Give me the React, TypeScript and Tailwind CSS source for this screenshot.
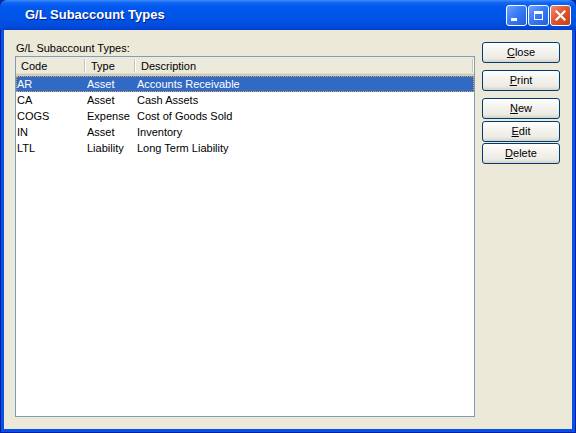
import React from 'react';

interface SubaccountType {
  code: string;
  type: string;
  description: string;
}

const ROWS: SubaccountType[] = [
  { code: 'AR', type: 'Asset', description: 'Accounts Receivable' },
  { code: 'CA', type: 'Asset', description: 'Cash Assets' },
  { code: 'COGS', type: 'Expense', description: 'Cost of Goods Sold' },
  { code: 'IN', type: 'Asset', description: 'Inventory' },
  { code: 'LTL', type: 'Liability', description: 'Long Term Liability' },
];

const FONT = { fontFamily: '"Liberation Sans", Arial, sans-serif' };

function XpButton({ label, mnemonic, className = '' }: { label: string; mnemonic: number; className?: string }) {
  return (
    <button
      className={`h-[21px] w-[78px] rounded-[3px] border border-[#003C74] bg-[linear-gradient(to_bottom,#FFFFFF_0%,#F4F3EE_40%,#ECEBE6_80%,#D8D2C6_100%)] text-[11px] leading-[19px] text-black ${className}`}
    >
      {label.slice(0, mnemonic)}
      <span className="underline">{label[mnemonic]}</span>
      {label.slice(mnemonic + 1)}
    </button>
  );
}

function TitleButton({ kind }: { kind: 'min' | 'max' | 'close' }) {
  const bg =
    kind === 'close'
      ? 'bg-[linear-gradient(135deg,#F08C6C_0%,#E0582F_45%,#C63E16_100%)]'
      : 'bg-[linear-gradient(135deg,#6FA2FF_0%,#3A7CF5_45%,#1F5FDE_100%)]';
  return (
    <div className={`flex h-[21px] w-[21px] items-center justify-center rounded-[3px] border border-white ${bg}`}>
      {kind === 'min' && <div className="mr-[5px] mt-[9px] h-[3px] w-[6px] bg-white" />}
      {kind === 'max' && <div className="h-[9px] w-[9px] border border-t-[3px] border-white" />}
      {kind === 'close' && (
        <svg width="11" height="11" viewBox="0 0 11 11">
          <path d="M1.5 1.5 L9.5 9.5 M9.5 1.5 L1.5 9.5" stroke="white" strokeWidth="2.2" strokeLinecap="square" />
        </svg>
      )}
    </div>
  );
}

export default function App() {
  return (
    <div className="h-[433px] w-[576px] bg-[#0A2A9C]" style={FONT}>
      <div className="flex h-full w-full flex-col overflow-hidden rounded-t-[7px]">
        {/* Title bar */}
        <div className="flex h-[30px] shrink-0 items-center bg-[linear-gradient(to_bottom,#3C8EFF_0%,#1668F5_8%,#0058EE_22%,#0054E6_60%,#004CDD_85%,#0040CF_100%)] pl-[25px] pr-[5px]">
          <span className="flex-1 text-[13px] font-bold text-white [text-shadow:1px_1px_0_#0A1E8A]">
            G/L Subaccount Types
          </span>
          <div className="flex gap-[1px]">
            <TitleButton kind="min" />
            <TitleButton kind="max" />
            <TitleButton kind="close" />
          </div>
        </div>

        {/* Body */}
        <div className="flex flex-1 border-x border-b border-[#00209C]">
          <div className="flex flex-1 border-x-[3px] border-b-[3px] border-[#0A4FE8] bg-[#ECE9D8] pb-[12px] pl-[11px] pr-[12px] pt-[11px]">
            <div className="flex w-[460px] flex-col">
              <div className="h-[15px] pl-[1px] text-[11px] leading-[15px] text-black">G/L Subaccount Types:</div>
              <div className="flex flex-1 flex-col border border-[#7F9DB9] bg-white">
                {/* Header */}
                <div className="flex h-[19px] bg-[#EBEADB] text-[11px] leading-[18px] text-black shadow-[inset_0_-1px_0_#D6D2C2,inset_0_-2px_0_#CBC7B8,inset_0_-3px_0_#E2DECD]">
                  <div className="w-[68px] pl-[5px]">Code</div>
                  <div className="mt-[2px] h-[13px] w-[2px] border-l border-r border-l-[#C7C5B2] border-r-white" />
                  <div className="w-[48px] pl-[5px]">Type</div>
                  <div className="mt-[2px] h-[13px] w-[2px] border-l border-r border-l-[#C7C5B2] border-r-white" />
                  <div className="flex-1 pl-[5px]">Description</div>
                  <div className="mt-[2px] h-[13px] w-[2px] border-l border-r border-l-[#C7C5B2] border-r-white" />
                </div>
                {/* Rows */}
                {ROWS.map((row, idx) => (
                  <div
                    key={row.code}
                    className={`flex h-[16px] text-[11px] leading-[14px] ${
                      idx === 0
                        ? 'border border-dotted border-[#E0A050] bg-[#316AC5] text-white'
                        : 'border border-transparent text-black'
                    }`}
                  >
                    <div className="w-[70px]">{row.code}</div>
                    <div className="w-[50px]">{row.type}</div>
                    <div className="flex-1">{row.description}</div>
                  </div>
                ))}
              </div>
            </div>

            <div className="ml-[7px] mt-[1px] flex w-[78px] flex-col">
              <XpButton label="Close" mnemonic={0} />
              <XpButton label="Print" mnemonic={0} className="mt-[7px]" />
              <XpButton label="New" mnemonic={0} className="mt-[7px]" />
              <XpButton label="Edit" mnemonic={0} className="mt-[2px]" />
              <XpButton label="Delete" mnemonic={0} className="mt-[1px]" />
            </div>
          </div>
        </div>
      </div>
    </div>
  );
}
